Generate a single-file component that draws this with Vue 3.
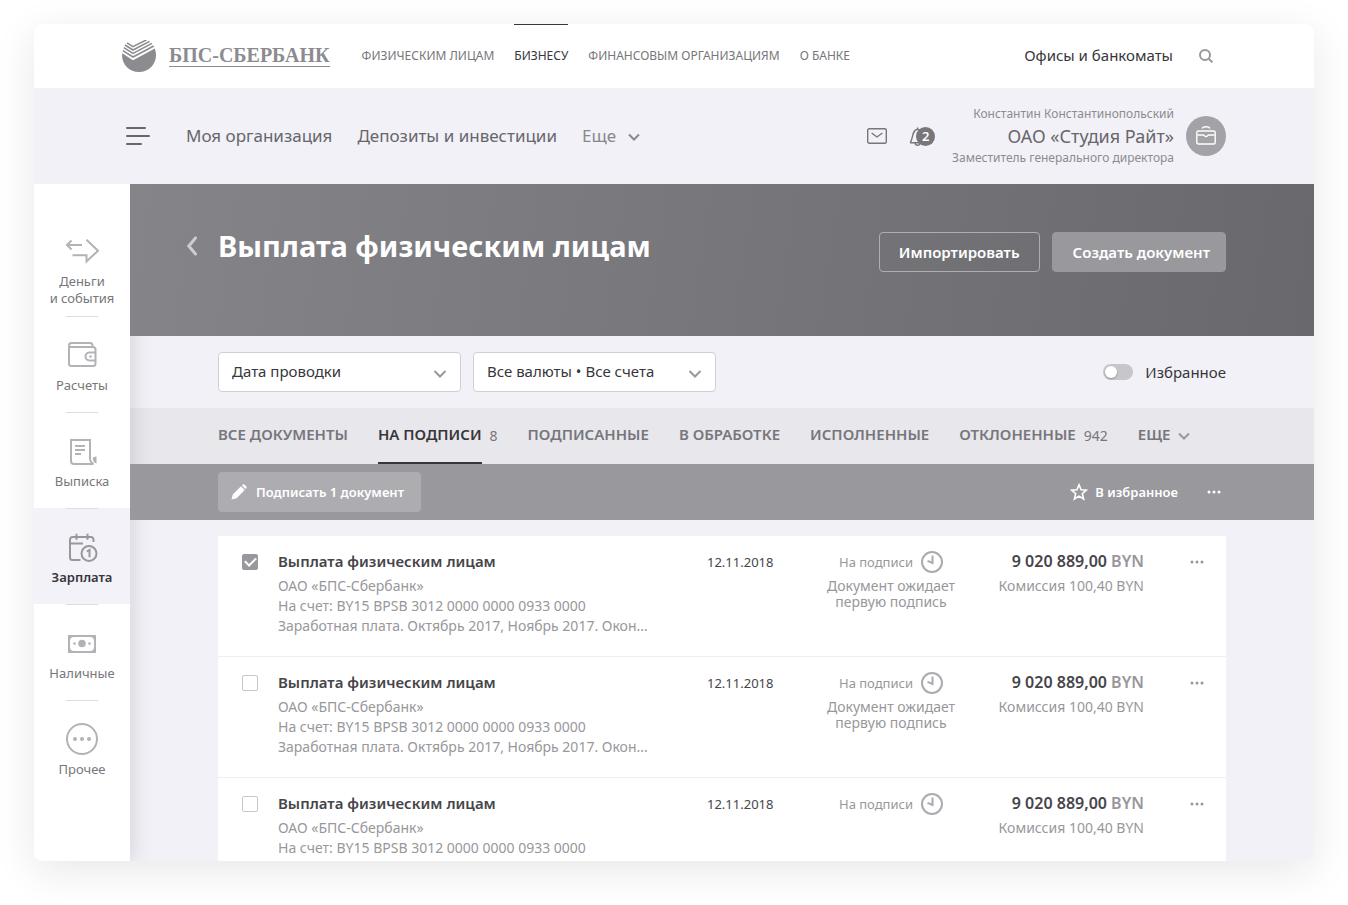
<script setup>
import { ref } from 'vue'

const audience = ['Физическим лицам', 'Бизнесу', 'Финансовым организациям', 'О банке']
const activeAudience = 'Бизнесу'

const sections = [
  { icon: 'money', label: ['Деньги', 'и события'] },
  { icon: 'wallet', label: ['Расчеты'] },
  { icon: 'statement', label: ['Выписка'] },
  { icon: 'salary', label: ['Зарплата'], active: true },
  { icon: 'cash', label: ['Наличные'] },
  { icon: 'other', label: ['Прочее'] },
]

const tabs = [
  { label: 'Все документы' },
  { label: 'На подписи', count: 8 },
  { label: 'Подписанные' },
  { label: 'В обработке' },
  { label: 'Исполненные' },
  { label: 'Отклоненные', count: 942 },
]
const activeTab = ref('На подписи')

const favouritesOnly = ref(false)

const waiting = ['Документ ожидает', 'первую подпись']
const payment = {
  title: 'Выплата физическим лицам',
  company: 'ОАО «БПС-Сбербанк»',
  account: 'На счет: BY15 BPSB 3012 0000 0000 0933 0000',
  purpose: 'Заработная плата. Октябрь 2017, Ноябрь 2017. Окон...',
  date: '12.11.2018',
  status: 'На подписи',
  amount: '9 020 889,00',
  currency: 'BYN',
  fee: 'Комиссия 100,40 BYN',
}
const documents = ref([
  { id: 1, selected: true, note: waiting, ...payment },
  { id: 2, selected: false, note: waiting, ...payment },
  { id: 3, selected: false, note: [], ...payment },
])
</script>

<template>
  <div class="window">
    <header class="topbar">
      <a class="logo" href="#" aria-label="БПС-Сбербанк">
        <svg class="logo-mark" viewBox="0 0 34 32" aria-hidden="true">
          <path d="M0.3 13.2 11 20.2 32.8 8.6C33.6 10.8 34 13 34 15.2 34 24.5 26.4 32 17 32S0 24.5 0 15.2Z" />
          <g class="logo-stripes">
            <path d="M0.8 10.600 11 17 31.800 6" />
            <path d="M1.800 7.600 11 13.400 30 3.400" />
            <path d="M3 5 11 10 27.600 1.400" />
            <path d="M5 2.800 11 6.700 24.600 -0.200" />
          </g>
        </svg>
        <span class="logo-text">БПС-СБЕРБАНК</span>
      </a>
      <nav class="audience" aria-label="Разделы сайта">
        <a
          v-for="item in audience"
          :key="item"
          href="#"
          :class="{ current: item === activeAudience }"
        >{{ item }}</a>
      </nav>
      <a class="offices" href="#">Офисы и банкоматы</a>
      <button class="icon-button search" type="button" aria-label="Поиск">
        <svg width="14" height="14" viewBox="0 0 14 14"><circle cx="6" cy="6" r="5" /><path d="m9.600 9.600 3.800 3.800" /></svg>
      </button>
    </header>

    <div class="orgbar">
      <button class="icon-button burger" type="button" aria-label="Меню">
        <svg width="24" height="18" viewBox="0 0 24 18"><path d="M1 1h18M1 9h22M1 17h14" /></svg>
      </button>
      <nav class="orgnav" aria-label="Основное меню">
        <a href="#">Моя организация</a>
        <a href="#">Депозиты и инвестиции</a>
        <button class="more" type="button">
          Еще
          <svg width="12" height="8" viewBox="0 0 12 8"><path d="m1 1.500 5 5 5-5" /></svg>
        </button>
      </nav>
      <button class="icon-button mail" type="button" aria-label="Сообщения">
        <svg width="20" height="16" viewBox="0 0 20 16"><rect x=".7" y=".7" width="18.600" height="14.600" rx="1.500" /><path d="m4.600 5 5.400 4 5.400-4" /></svg>
      </button>
      <button class="icon-button bell" type="button" aria-label="Уведомления: 2">
        <svg width="18" height="19" viewBox="0 0 18 19"><path d="M1 15.800h14.500M1.200 15.500C4.500 11.500 2.400 3.200 8.600 2.200c6 1 4 10 7 13M8.600 2.200V.4M6 16c.3 3 4.700 3 5 0" /></svg>
        <span class="badge">2</span>
      </button>
      <div class="account">
        <span>Константин Константинопольский</span>
        <strong>ОАО «Студия Райт»</strong>
        <span>Заместитель генерального директора</span>
      </div>
      <button class="avatar" type="button" aria-label="Профиль организации">
        <svg width="20" height="20" viewBox="0 0 20 20"><rect x=".8" y="5" width="18.400" height="13" rx="1.500" /><path d="M6.200 2.500C6.800.9 8 .7 10 .7s3.200.2 3.800 1.800M1.500 9h6c.8 0 1 1.600 2.500 1.600S11.700 9 12.500 9h6" /></svg>
      </button>
    </div>

    <div class="body">
      <aside class="sidebar">
        <a
          v-for="s in sections"
          :key="s.icon"
          class="section"
          :class="{ active: s.active }"
          href="#"
        >
          <svg class="section-icon" width="34" height="32" viewBox="0 0 34 32" aria-hidden="true">
            <g v-if="s.icon === 'money'">
              <path d="M6.500 5.500 2 10l4.500 4.500M2.500 10H17M21.500 4.800 33 15.800 21.500 26.400v-6.200H7.500" />
            </g>
            <g v-else-if="s.icon === 'wallet'">
              <path d="M27.500 8V6.500A2.500 2.500 0 0 0 25 4H6.500A2.500 2.500 0 0 0 4 6.500v18A2.500 2.500 0 0 0 6.500 27H28a2.500 2.500 0 0 0 2.500-2.500v-14A2.500 2.500 0 0 0 28 8H4.500M30.500 13.500h-6a4 4 0 0 0 0 8h6" />
              <circle class="solid" cx="25.500" cy="17.500" r="1.300" />
            </g>
            <g v-else-if="s.icon === 'statement'">
              <path d="M25 23V5H6v21a3 3 0 0 0 3 3h19.500C26 28 25 26 25 23M10 11h10M10 15h10M10 19h6" />
              <path class="solid" d="M27.800 22.500 31.500 21.200V28.500C28.800 28 27.800 25.500 27.800 22.500Z" />
            </g>
            <g v-else-if="s.icon === 'salary'">
              <path d="M15.500 29H7.500A2.500 2.500 0 0 1 5 26.500V8.500A2.500 2.500 0 0 1 7.500 6H26a2.500 2.500 0 0 1 2.500 2.500V11M5 12.500h13M11.500 2.800v6M22.500 2.800v6" />
              <circle cx="24" cy="22.500" r="7.500" />
              <path d="M21.800 20.500 24.500 19v7.300" />
            </g>
            <g v-else-if="s.icon === 'cash'">
              <path class="solid" fill-rule="evenodd" d="M3 8h28v18H3ZM9 10a4 4 0 0 0-4 4v6a4 4 0 0 0 4 4h16a4 4 0 0 0 4-4v-6a4 4 0 0 0-4-4Z" />
              <circle class="solid" cx="17" cy="16.500" r="3.800" />
              <circle class="solid" cx="9.500" cy="16.500" r="1.300" />
              <circle class="solid" cx="24.500" cy="16.500" r="1.300" />
            </g>
            <g v-else>
              <circle cx="17" cy="16" r="15" />
              <circle class="solid" cx="10" cy="16" r="2" />
              <circle class="solid" cx="17" cy="16" r="2" />
              <circle class="solid" cx="24" cy="16" r="2" />
            </g>
          </svg>
          <span v-for="line in s.label" :key="line" class="section-label">{{ line }}</span>
        </a>
      </aside>

      <main class="content">
        <section class="hero">
          <a class="back" href="#" aria-label="Назад">
            <svg width="12" height="20" viewBox="0 0 12 20"><path d="M9.500 2 2.800 10l6.700 8" /></svg>
          </a>
          <h1>Выплата физическим лицам</h1>
          <div class="hero-actions">
            <button class="button outlined" type="button">Импортировать</button>
            <button class="button filled" type="button">Создать документ</button>
          </div>
        </section>

        <section class="filters">
          <div class="select">
            <select aria-label="Дата"><option>Дата проводки</option></select>
            <svg width="14" height="8" viewBox="0 0 14 8"><path d="m1.500 1 5.500 5.500L12.500 1" /></svg>
          </div>
          <div class="select">
            <select aria-label="Валюты и счета"><option>Все валюты • Все счета</option></select>
            <svg width="14" height="8" viewBox="0 0 14 8"><path d="m1.500 1 5.500 5.500L12.500 1" /></svg>
          </div>
          <label class="toggle">
            <input v-model="favouritesOnly" type="checkbox" />
            Избранное
          </label>
        </section>

        <nav class="tabs" aria-label="Статус документов">
          <button
            v-for="tab in tabs"
            :key="tab.label"
            class="tab"
            :class="{ active: tab.label === activeTab }"
            type="button"
            @click="activeTab = tab.label"
          >
            <span class="tab-label">{{ tab.label }}</span>
            <span v-if="tab.count" class="tab-count">{{ tab.count }}</span>
          </button>
          <button class="tab tab-more" type="button">
            <span class="tab-label">Еще</span>
            <svg width="12" height="8" viewBox="0 0 12 8"><path d="m1 1.500 5 5 5-5" /></svg>
          </button>
        </nav>

        <section class="bulk">
          <button class="sign" type="button">
            <svg width="16" height="16" viewBox="0 0 16 16">
              <path d="M.5 15.500 1.800 10.400 10 2.300 13.700 6 5.600 14.200Z" />
              <path d="m11 1.400.7-.7c.5-.5 1.200-.5 1.700 0l1.900 1.900c.5.500.5 1.200 0 1.700l-.7.7Z" />
            </svg>
            Подписать 1 документ
          </button>
          <button class="favourite" type="button">
            <svg width="18" height="18" viewBox="0 0 18 18"><path d="m9 1.800 2.100 5 5.200.4-4 3.500 1.300 5.300L9 13.100 4.400 16l1.300-5.300-4-3.500 5.200-.4Z" /></svg>
            В избранное
          </button>
          <button class="dots" type="button" aria-label="Другие действия">
            <svg width="14" height="4" viewBox="0 0 14 4"><circle cx="2" cy="2" r="1.500" /><circle cx="7" cy="2" r="1.500" /><circle cx="12" cy="2" r="1.500" /></svg>
          </button>
        </section>

        <table class="documents" aria-label="Документы на подписи">
          <colgroup>
            <col class="col-check" />
            <col />
            <col class="col-date" />
            <col class="col-status" />
            <col class="col-amount" />
            <col class="col-more" />
          </colgroup>
          <tbody>
            <tr v-for="doc in documents" :key="doc.id">
              <td class="check">
                <input v-model="doc.selected" type="checkbox" :aria-label="'Выбрать документ ' + doc.id" />
              </td>
              <td class="info">
                <div class="title">{{ doc.title }}</div>
                <p>{{ doc.company }}</p>
                <p>{{ doc.account }}</p>
                <p>{{ doc.purpose }}</p>
              </td>
              <td class="date">{{ doc.date }}</td>
              <td class="status">
                <div class="status-name">
                  {{ doc.status }}
                  <svg width="22" height="22" viewBox="0 0 22 22"><circle cx="11" cy="11" r="10" /><path d="M11.500 4.500v7.500L6.500 9.800" /></svg>
                </div>
                <div v-for="line in doc.note" :key="line">{{ line }}</div>
              </td>
              <td class="amount">
                <div class="sum">{{ doc.amount }} <span>{{ doc.currency }}</span></div>
                <p>{{ doc.fee }}</p>
              </td>
              <td class="row-more">
                <button class="dots" type="button" aria-label="Действия с документом">
                  <svg width="14" height="4" viewBox="0 0 14 4"><circle cx="2" cy="2" r="1.500" /><circle cx="7" cy="2" r="1.500" /><circle cx="12" cy="2" r="1.500" /></svg>
                </button>
              </td>
            </tr>
          </tbody>
        </table>
      </main>
    </div>
  </div>
</template>

<style>
html {
  background: #fff;
}
</style>

<style scoped>
* {
  box-sizing: border-box;
}

.window {
  display: flex;
  flex-direction: column;
  height: calc(100vh - 68px);
  margin: 24px 34px 44px;
  overflow: hidden;
  border-radius: 8px;
  background: #f2f1f7;
  box-shadow: 0 10px 40px rgba(30, 30, 40, 0.1);
  color: #37363b;
  font-family: "Noto Sans", "Open Sans", sans-serif;
  font-size: 15px;
}

a {
  color: inherit;
  text-decoration: none;
}

button {
  padding: 0;
  border: 0;
  background: none;
  color: inherit;
  font: inherit;
  white-space: nowrap;
  cursor: pointer;
}

svg {
  display: block;
  flex: none;
  fill: none;
  stroke: currentColor;
  stroke-width: 2;
}

p {
  margin: 0;
}

/* Bank header */
.topbar {
  display: flex;
  flex: none;
  align-items: center;
  height: 64px;
  padding: 0 88px;
  background: #fff;
}

.logo {
  display: flex;
  align-items: center;
  gap: 13px;
  color: #8c8b90;
}

.logo-mark {
  width: 34px;
  height: 32px;
  fill: currentColor;
  stroke: none;
}

.logo-stripes {
  fill: none;
  stroke: currentColor;
  stroke-width: 1.6;
}

.logo-text {
  border-bottom: 1px solid currentColor;
  font-family: "Liberation Serif", serif;
  font-size: 20px;
  font-weight: 700;
  line-height: 21px;
}

.audience {
  display: flex;
  align-self: stretch;
  gap: 20px;
  margin-left: 32px;
  color: #77767b;
  font-size: 12px;
  line-height: 62px;
  text-transform: uppercase;
  white-space: nowrap;
}

.audience a {
  border-top: 1px solid transparent;
}

.audience .current {
  border-color: #37363b;
  color: #37363b;
}

.offices {
  margin-left: auto;
  padding-bottom: 2px;
  white-space: nowrap;
}

.icon-button {
  display: flex;
  align-items: center;
  justify-content: center;
}

.search {
  margin: 0 13px 0 26px;
  color: #98979c;
}

/* Organisation header */
.orgbar {
  position: relative;
  z-index: 2;
  display: flex;
  flex: none;
  align-items: center;
  height: 96px;
  padding: 0 88px 0 92px;
  background: #f2f1f7;
  color: #67666b;
}

.burger svg {
  stroke-linecap: round;
}

.orgnav {
  display: flex;
  align-items: center;
  gap: 25px;
  margin-left: 36px;
  padding-bottom: 2px;
  font-size: 17px;
  white-space: nowrap;
}

.more {
  display: flex;
  align-items: center;
  gap: 12px;
  color: #88878c;
}

.more svg {
  margin-top: 4px;
}

.mail {
  margin-left: auto;
  color: #77767b;
}

.mail svg,
.bell svg,
.avatar svg {
  stroke-width: 1.4;
}

.bell {
  position: relative;
  margin: 0 17px 0 22px;
  padding-right: 8px;
  color: #77767b;
}

.badge {
  position: absolute;
  top: 0;
  right: 0;
  width: 19px;
  height: 19px;
  border-radius: 50%;
  background: #77767b;
  color: #fff;
  font-size: 13px;
  font-weight: 600;
  line-height: 19px;
}

.account {
  display: flex;
  flex-direction: column;
  color: #8c8b90;
  font-size: 12px;
  line-height: 22px;
  text-align: right;
  white-space: nowrap;
}

.account strong {
  color: #67666b;
  font-size: 18px;
  font-weight: 400;
}

.avatar {
  display: flex;
  align-items: center;
  justify-content: center;
  width: 40px;
  height: 40px;
  margin-left: 12px;
  border-radius: 50%;
  background: #a3a2a7;
  color: #fff;
}

/* Side navigation */
.body {
  display: flex;
  flex: 1;
  min-height: 0;
}

.sidebar {
  z-index: 1;
  flex: none;
  width: 96px;
  padding-top: 28px;
  background: #fff;
  box-shadow: 2px 0 20px rgba(40, 40, 60, 0.15);
}

.section {
  display: flex;
  flex-direction: column;
  align-items: center;
  min-height: 96px;
  padding: 23px 0 9px;
  color: #77767b;
  font-size: 13px;
  line-height: 17px;
}

.section + .section {
  background-image: linear-gradient(#dddce1, #dddce1);
  background-position: center top;
  background-size: 32px 1px;
  background-repeat: no-repeat;
}

.section-icon {
  margin-bottom: 6px;
  color: #b3b2b7;
}

.solid {
  fill: currentColor;
  stroke: none;
}

.section.active {
  background-color: #f3f2f8;
  color: #37363b;
  font-weight: 600;
}

.active .section-icon {
  color: #98979c;
}

/* Page title */
.content {
  flex: 1;
  min-width: 0;
}

.hero {
  position: relative;
  z-index: 2;
  display: flex;
  align-items: flex-start;
  height: 152px;
  padding: 40px 88px 0 56px;
  background: linear-gradient(98deg, #858489, #69686c);
  color: #fff;
}

.back {
  margin: 12px 20px 0 0;
  opacity: 0.6;
}

.back svg {
  stroke-width: 3;
  stroke-linecap: round;
}

h1 {
  margin: 0;
  font-size: 29px;
  font-weight: 700;
  line-height: 44px;
  white-space: nowrap;
}

.hero-actions {
  display: flex;
  gap: 12px;
  margin: 8px 0 0 auto;
}

.button {
  height: 40px;
  padding: 0 19px;
  border: 1px solid #aeadb2;
  border-radius: 4px;
  font-size: 15px;
  font-weight: 600;
}

.filled {
  padding: 0 15px 0 20px;
  border-color: #99989d;
  background: #99989d;
}

/* Filters */
.filters {
  display: flex;
  align-items: center;
  gap: 12px;
  height: 72px;
  padding: 0 88px;
}

.select {
  display: grid;
  align-items: center;
  width: 243px;
  height: 40px;
  border: 1px solid #d0cfd4;
  border-radius: 4px;
  background: #fff;
}

.select > * {
  grid-area: 1 / 1;
}

select {
  width: 100%;
  height: 38px;
  padding: 0 13px 2px;
  border: 0;
  appearance: none;
  background: none;
  color: inherit;
  font: inherit;
}

.select svg {
  justify-self: end;
  margin: 3px 13px 0 0;
  color: #98979c;
  pointer-events: none;
}

.toggle {
  display: flex;
  align-items: center;
  gap: 12px;
  margin-left: auto;
}

.toggle input {
  width: 30px;
  height: 16px;
  margin: 0;
  padding: 2px;
  border-radius: 8px;
  appearance: none;
  background: #c7c6cb;
}

.toggle input::before {
  display: block;
  width: 12px;
  height: 12px;
  border-radius: 50%;
  background: #fff;
  box-shadow: 0 1px 2px rgba(0, 0, 0, 0.25);
  content: "";
}

.toggle input:checked::before {
  margin-left: auto;
}

/* Status tabs */
.tabs {
  display: flex;
  gap: 30px;
  height: 56px;
  padding: 0 88px;
  background: #e8e7ec;
  color: #77767b;
}

.tab {
  display: flex;
  align-items: center;
  gap: 8px;
}

.tab-label {
  padding-bottom: 2px;
  border-bottom: 2px solid transparent;
  font-weight: 600;
  line-height: 52px;
  text-transform: uppercase;
}

.tab-count {
  padding-bottom: 2px;
  font-size: 14px;
}

.tab svg {
  color: #98979c;
}

.active .tab-label {
  border-bottom-color: #37363b;
  color: #37363b;
}

/* Actions for the selected documents */
.bulk {
  position: relative;
  z-index: 2;
  display: flex;
  align-items: center;
  height: 56px;
  padding: 0 93px 0 88px;
  background: #99989d;
  color: #fff;
  font-size: 13px;
  font-weight: 600;
}

.sign,
.favourite {
  display: flex;
  align-items: center;
}

.sign {
  gap: 9px;
  height: 40px;
  padding: 0 17px 0 13px;
  border-radius: 4px;
  background: #adacb1;
}

.sign svg,
.dots svg {
  fill: currentColor;
  stroke: none;
}

.favourite {
  gap: 7px;
  margin-left: auto;
}

.favourite svg {
  stroke-width: 1.6;
}

.bulk .dots {
  margin-left: 29px;
}

/* Documents */
.documents {
  width: calc(100% - 176px);
  margin: 16px 88px 0;
  border-spacing: 0;
  table-layout: fixed;
  background: #fff;
  color: #98979c;
  font-size: 14px;
}

.col-check {
  width: 60px;
}

.col-date {
  width: 119px;
}

.col-status {
  width: 130px;
}

.col-amount {
  width: 188px;
}

.col-more {
  width: 82px;
}

td {
  height: 121px;
  padding: 15px 0 0;
  border-bottom: 1px solid #eeedf2;
  vertical-align: top;
  white-space: nowrap;
}

.check {
  padding: 18px 0 0 24px;
}

.check input {
  display: grid;
  place-content: center;
  width: 16px;
  height: 16px;
  margin: 0;
  border: 1px solid #c7c6cb;
  border-radius: 2px;
  appearance: none;
  background: #fff;
}

.check input:checked {
  border-color: #99989d;
  background: #99989d;
}

.check input:checked::before {
  width: 9px;
  height: 5px;
  margin-bottom: 3px;
  border: solid #fff;
  border-width: 0 0 2px 2px;
  rotate: -45deg;
  content: "";
}

.info {
  line-height: 20px;
}

.title {
  margin-bottom: 5px;
  color: #46454a;
  font-size: 15px;
  font-weight: 600;
}

.date {
  color: #46454a;
  font-size: 13px;
  line-height: 22px;
}

.status {
  line-height: 16px;
  text-align: center;
}

.status-name {
  display: flex;
  align-items: center;
  justify-content: center;
  gap: 8px;
  height: 22px;
  margin-bottom: 5px;
  font-size: 13px;
}

.status-name svg {
  color: #abaaaf;
}

.amount {
  line-height: 20px;
  text-align: right;
}

.sum {
  margin-bottom: 5px;
  color: #46454a;
  font-size: 16px;
  font-weight: 600;
}

.sum span {
  color: #98979c;
}

.row-more {
  padding: 15px 22px 0 0;
}

.dots {
  display: flex;
  align-items: center;
  height: 22px;
}

.row-more .dots {
  margin-left: auto;
}
</style>
